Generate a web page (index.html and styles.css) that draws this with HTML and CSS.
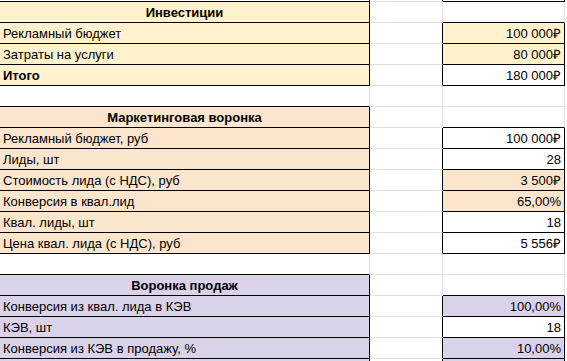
FILE: index.html
```html
<!DOCTYPE html>
<html lang="ru">
<head>
<meta charset="utf-8">
<title>Расчёт</title>
<link rel="stylesheet" href="styles.css">
</head>
<body>
<div class="sheet">
  <div class="row top">
    <div class="c a k"></div><div class="c b kr"></div><div class="c v k"></div>
  </div>

  <div class="row">
    <div class="c a k y kb h">Инвестиции</div><div class="c b"></div><div class="c v kb"></div>
  </div>
  <div class="row">
    <div class="c a k y">Рекламный бюджет</div><div class="c b kr"></div><div class="c v k y">100 000₽</div>
  </div>
  <div class="row">
    <div class="c a k y">Затраты на услуги</div><div class="c b kr"></div><div class="c v k y">80 000₽</div>
  </div>
  <div class="row">
    <div class="c a k y bold">Итого</div><div class="c b kr"></div><div class="c v k">180 000₽</div>
  </div>
  <div class="row">
    <div class="c a kb"></div><div class="c b"></div><div class="c v"></div>
  </div>

  <div class="row">
    <div class="c a k p h">Маркетинговая воронка</div><div class="c b"></div><div class="c v kb"></div>
  </div>
  <div class="row">
    <div class="c a k p">Рекламный бюджет, руб</div><div class="c b kr"></div><div class="c v k">100 000₽</div>
  </div>
  <div class="row">
    <div class="c a k p">Лиды, шт</div><div class="c b kr"></div><div class="c v k">28</div>
  </div>
  <div class="row">
    <div class="c a k p">Стоимость лида (с НДС), руб</div><div class="c b kr"></div><div class="c v k p">3 500₽</div>
  </div>
  <div class="row">
    <div class="c a k p">Конверсия в квал.лид</div><div class="c b kr"></div><div class="c v k p">65,00%</div>
  </div>
  <div class="row">
    <div class="c a k p">Квал. лиды, шт</div><div class="c b kr"></div><div class="c v k">18</div>
  </div>
  <div class="row">
    <div class="c a k p">Цена квал. лида (с НДС), руб</div><div class="c b kr"></div><div class="c v k">5 556₽</div>
  </div>
  <div class="row">
    <div class="c a kb"></div><div class="c b"></div><div class="c v"></div>
  </div>

  <div class="row">
    <div class="c a k l h">Воронка продаж</div><div class="c b"></div><div class="c v kb"></div>
  </div>
  <div class="row">
    <div class="c a k l">Конверсия из квал. лида в КЭВ</div><div class="c b kr"></div><div class="c v k l">100,00%</div>
  </div>
  <div class="row">
    <div class="c a k l">КЭВ, шт</div><div class="c b kr"></div><div class="c v k">18</div>
  </div>
  <div class="row">
    <div class="c a k l">Конверсия из КЭВ в продажу, %</div><div class="c b kr"></div><div class="c v k l">10,00%</div>
  </div>
  <div class="row">
    <div class="c a k l"></div><div class="c b kr"></div><div class="c v k l"></div>
  </div>
</div>
</body>
</html>
```

FILE: styles.css
```css
html, body {
  margin: 0;
  padding: 0;
  background: #ffffff;
  overflow: hidden;
}

.sheet {
  width: 567px;
  height: 361px;
  overflow: hidden;
  font-family: "Liberation Sans", Arial, sans-serif;
  font-size: 13px;
  color: #000000;
}

.row {
  display: flex;
  height: 21px;
}

.row.top {
  height: 2px;
}

.c {
  box-sizing: border-box;
  height: 100%;
  border-right: 1px solid #e2e2e3;
  border-bottom: 1px solid #e2e2e3;
  padding: 1px 3px 0 3px;
  line-height: 19px;
  white-space: nowrap;
  overflow: hidden;
}

.a { width: 370px; }
.b { width: 73px; }
.v { width: 122px; text-align: right; }

.k {
  border-right-color: #000000;
  border-bottom-color: #000000;
}

.kb {
  border-bottom-color: #000000;
}

.kr {
  border-right-color: #000000;
}

.y { background: #fff2cc; }
.p { background: #fce5cd; }
.l { background: #d9d2e9; }

.h {
  font-weight: bold;
  text-align: center;
}

.bold {
  font-weight: bold;
}
```
